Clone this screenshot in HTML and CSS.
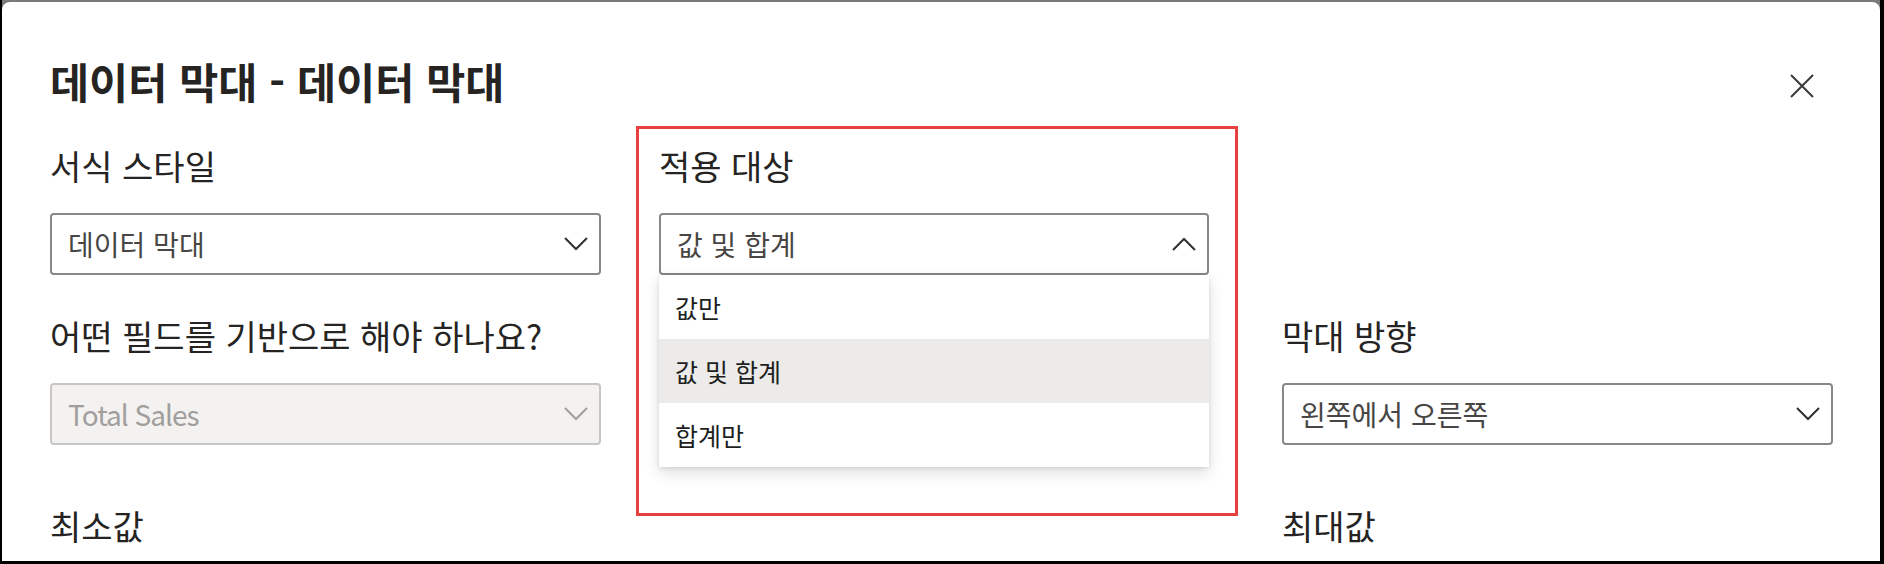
FILE: index.html
```html
<!DOCTYPE html>
<html lang="ko">
<head>
<meta charset="utf-8">
<title>데이터 막대 - 데이터 막대</title>
<link rel="stylesheet" href="styles.css">
</head>
<body>
<div class="frame">
  <div class="dialog">
    <header class="dialog-header">
      <h1 class="dialog-title">데이터 막대 - 데이터 막대</h1>
      <button class="close-btn" aria-label="닫기">
        <svg width="24" height="24" viewBox="0 0 24 24"><path d="M1 1 L23 23 M23 1 L1 23" stroke="#3b3a39" stroke-width="2" fill="none"/></svg>
      </button>
    </header>
    <div class="fields">
      <div class="field col-1">
        <span class="field-label">서식 스타일</span>
        <div class="dropdown">
          <span class="dropdown-text">데이터 막대</span>
          <svg class="chevron" width="24" height="14" viewBox="0 0 24 14"><polyline points="1,1 12,12 23,1" fill="none" stroke="#323130" stroke-width="2"/></svg>
        </div>
      </div>
      <div class="field col-2">
        <span class="field-label">적용 대상</span>
        <div class="dropdown-wrap">
          <div class="dropdown">
            <span class="dropdown-text">값 및 합계</span>
            <svg class="chevron" width="24" height="14" viewBox="0 0 24 14"><polyline points="1,13 12,2 23,13" fill="none" stroke="#323130" stroke-width="2"/></svg>
          </div>
          <ul class="menu">
            <li class="menu-item">값만</li>
            <li class="menu-item is-selected">값 및 합계</li>
            <li class="menu-item">합계만</li>
          </ul>
        </div>
      </div>
      <div class="field col-1">
        <span class="field-label">어떤 필드를 기반으로 해야 하나요?</span>
        <div class="dropdown is-disabled">
          <span class="dropdown-text">Total Sales</span>
          <svg class="chevron" width="24" height="14" viewBox="0 0 24 14"><polyline points="1,1 12,12 23,1" fill="none" stroke="#a19f9d" stroke-width="2"/></svg>
        </div>
      </div>
      <div class="field col-3">
        <span class="field-label">막대 방향</span>
        <div class="dropdown">
          <span class="dropdown-text">왼쪽에서 오른쪽</span>
          <svg class="chevron" width="24" height="14" viewBox="0 0 24 14"><polyline points="1,1 12,12 23,1" fill="none" stroke="#323130" stroke-width="2"/></svg>
        </div>
      </div>
      <div class="field col-1 row-last">
        <span class="field-label">최소값</span>
      </div>
      <div class="field col-3 row-last">
        <span class="field-label">최대값</span>
      </div>
    </div>
    <div class="highlight-box"></div>
  </div>
</div>
</body>
</html>
```
FILE: styles.css
```css
* { box-sizing: border-box; }

html, body {
  margin: 0;
  padding: 0;
  overflow: hidden;
  background: #ffffff;
}

body {
  font-family: "Noto Sans CJK KR", "Noto Sans", sans-serif;
  color: #252423;
}

.frame {
  width: 1884px;
  height: 564px;
  background: #7a7a7a;
  border-left: 2px solid #000;
  border-right: 4px solid #000;
  border-bottom: 3px solid #000;
  padding-top: 2px;
}

.dialog {
  position: relative;
  height: 100%;
  background: #ffffff;
  border-radius: 8px 8px 0 0;
  overflow: hidden;
  padding: 0 47px 0 48px;
}

.dialog-header {
  display: flex;
  justify-content: space-between;
  align-items: flex-start;
}

.dialog-title {
  margin: 55px 0 0 0;
  font-size: 42.5px;
  line-height: 48px;
  font-weight: 700;
  color: #252423;
  white-space: nowrap;
}

.close-btn {
  margin: 72px 19px 0 0;
  padding: 0;
  width: 24px;
  height: 24px;
  border: none;
  background: none;
  display: flex;
}

.fields {
  margin-top: 41px;
  display: grid;
  grid-template-columns: 551px 58px 550px 73px 551px;
  row-gap: 41px;
}

.col-1 { grid-column: 1; }
.col-2 { grid-column: 3; }
.col-3 { grid-column: 5; }

.row-last { margin-top: 20px; }

.field {
  display: flex;
  flex-direction: column;
}

.field-label {
  display: block;
  font-size: 34px;
  line-height: 40px;
  color: #252423;
  margin-bottom: 27px;
  white-space: nowrap;
}

.row-last .field-label { margin-bottom: 0; }

.dropdown {
  height: 62px;
  border: 2px solid #8a8886;
  border-radius: 4px;
  background: #ffffff;
  display: flex;
  align-items: center;
  justify-content: space-between;
  padding: 0 11px 0 16px;
}

.dropdown-text {
  font-size: 28px;
  color: #484644;
  white-space: nowrap;
}

.chevron { display: block; flex: none; }

.dropdown.is-disabled {
  background: #f3f2f1;
  border-color: #c8c6c4;
}

.dropdown.is-disabled .dropdown-text {
  color: #a19f9d;
  letter-spacing: -1px;
}

.dropdown-wrap {
  position: relative;
}

.menu {
  position: absolute;
  top: 100%;
  left: 0;
  right: 0;
  margin: 0;
  padding: 0;
  list-style: none;
  background: #ffffff;
  box-shadow: 0 6px 14px rgba(0, 0, 0, 0.13), 0 1px 4px rgba(0, 0, 0, 0.10);
  z-index: 2;
}

.menu-item {
  height: 64px;
  display: flex;
  align-items: center;
  padding: 0 16px;
  font-size: 25px;
  color: #201f1e;
}

.menu-item.is-selected {
  background: #edebe9;
}

.highlight-box {
  position: absolute;
  left: 634px;
  top: 124px;
  width: 602px;
  height: 390px;
  border: 3px solid #e8403f;
  pointer-events: none;
}
```
